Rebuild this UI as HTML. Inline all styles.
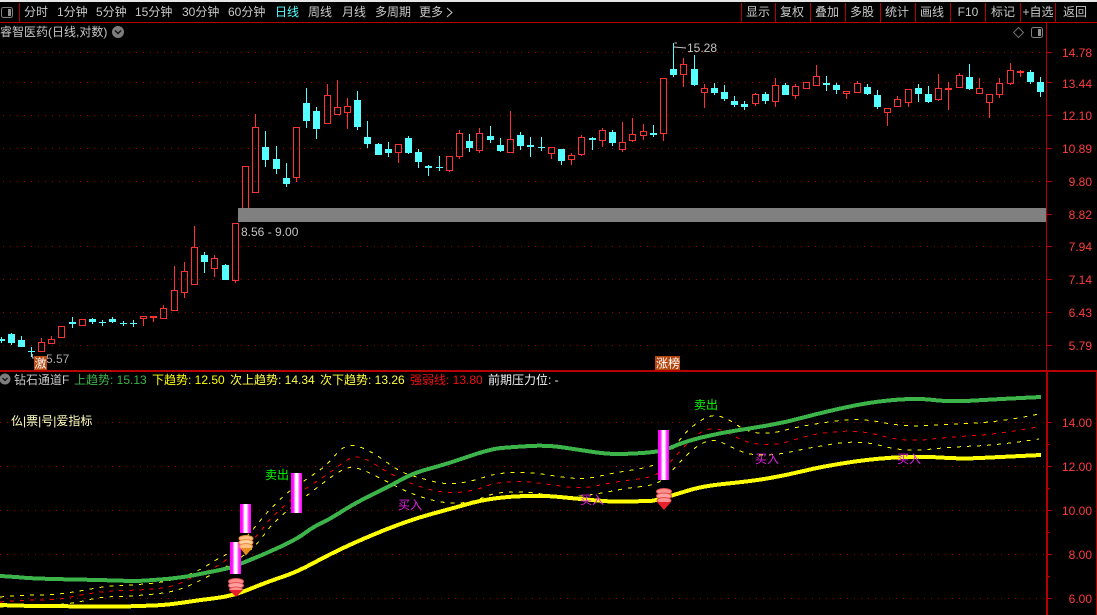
<!DOCTYPE html>
<html lang="zh">
<head>
<meta charset="utf-8">
<title>睿智医药</title>
<style>
html,body{margin:0;padding:0;background:#000;width:1097px;height:615px;overflow:hidden}
svg{display:block}
text{font-family:"Liberation Sans","Noto Sans CJK SC",sans-serif;font-size:12px}
.tb text{fill:#c8c8c8}
.ax text{fill:#ff3c3c;text-anchor:end}
.c{shape-rendering:crispEdges;fill:none}
</style>
</head>
<body>
<svg width="1097" height="615" viewBox="0 0 1097 615" xmlns="http://www.w3.org/2000/svg">
<rect width="1097" height="615" fill="#000"/>
<rect width="1097" height="2" fill="#e6e6e6"/>

<!-- grid -->
<g class="c" stroke="#a00000" stroke-dasharray="1 6">
<path d="M3 52.500H1044M3 82.500H1044M3 115.500H1044M3 148.500H1044M3 181.500H1044M3 246.500H1044M3 279.500H1044M3 312.500H1044M3 345.500H1044"/>
<path d="M0 422.500H1044M0 466.500H1044M0 510.500H1044M0 554.500H1044M0 598.500H1044"/>
</g>

<!-- toolbar -->
<g class="c" stroke="#b80000">
<path d="M0 22.500H1097M19.500 3V22M741.500 3V22M775.500 3V22M810.500 3V22M845.500 3V22M880.500 3V22M915.500 3V22M950.500 3V22M985.500 3V22M1020.500 3V22M1055.500 3V22"/>
<path d="M0 370.500H1097M0 371.500H1097"/>
<path d="M1046.500 22V615"/>
<path d="M1047.500 371V615M1096.500 371V615"/>
<path d="M1046 52.500H1052M1046 82.500H1052M1046 115.500H1052M1046 148.500H1052M1046 181.500H1052M1046 214.500H1052M1046 246.500H1052M1046 279.500H1052M1046 312.500H1052M1046 345.500H1052"/>
<path d="M1046 422.500H1052M1046 444.500H1050M1046 466.500H1052M1046 488.500H1050M1046 510.500H1052M1046 532.500H1050M1046 554.500H1052M1046 576.500H1050M1046 598.500H1052"/>
</g>
<rect x="1.500" y="7.500" width="11" height="10" rx="2" fill="none" stroke="#808080"/>
<rect x="8" y="9" width="3" height="7" fill="#909090"/>
<g class="tb">
<text x="24" y="16">分时</text>
<text x="57" y="16">1分钟</text>
<text x="96" y="16">5分钟</text>
<text x="135" y="16">15分钟</text>
<text x="182" y="16">30分钟</text>
<text x="228" y="16">60分钟</text>
<text x="275" y="16" style="fill:#55ffff">日线</text>
<text x="308" y="16">周线</text>
<text x="342" y="16">月线</text>
<text x="375" y="16">多周期</text>
<text x="419" y="16">更多</text>
<g text-anchor="middle">
<text x="758" y="16">显示</text>
<text x="792" y="16">复权</text>
<text x="827" y="16">叠加</text>
<text x="862" y="16">多股</text>
<text x="897" y="16">统计</text>
<text x="932" y="16">画线</text>
<text x="968" y="16">F10</text>
<text x="1003" y="16">标记</text>
<text x="1038" y="16">+自选</text>
<text x="1075" y="16">返回</text>
</g>
<text x="0" y="36">睿智医药(日线,对数)</text>
</g>
<path d="M447 8l5 4.500-5 4.500" fill="none" stroke="#c8c8c8"/>
<circle cx="118" cy="32" r="6" fill="#7d7d7d"/>
<path d="M115 30.500l3 3 3-3" fill="none" stroke="#111" stroke-width="1.500"/>
<path d="M1018.500 27.500l5 5-5 5-5-5z" fill="none" stroke="#707070"/>
<rect x="1031.500" y="27.500" width="11" height="10" rx="2" fill="none" stroke="#808080"/>
<rect x="1038" y="29" width="3" height="7" fill="#909090"/>
<g fill="#ff00ff" class="c">
<rect x="967" y="40" width="3" height="3"/>
<rect x="997" y="40" width="3" height="3"/>
<rect x="1028" y="40" width="3" height="3"/>
</g>

<!-- cyan candles -->
<path class="c" stroke="#55ffff" d="M1.500 337V343M11.500 333V345M21.500 336V347M31.500 347V357M72.500 317V328M92.500 318V324M102.500 320V326M112.500 317V323M123.500 321V326M133.500 320V327M204.500 252V273M225.500 264V280M265.500 131V167M276.500 146V174M286.500 163V187M306.500 88V128M316.500 107V139M357.500 91V130M367.500 121V148M378.500 143V155M388.500 142V157M408.500 136V154M418.500 149V168M428.500 165V176M439.500 156V171M469.500 134V152M490.500 126V143M500.500 138V152M520.500 132V150M530.500 137V157M541.500 137V151M561.500 149V165M592.500 137V150M612.500 130V146M653.500 125V137M673.500 43V77M694.500 55V86M714.500 83V95M724.500 85V101M734.500 96V107M744.500 101V110M765.500 92V104M785.500 83V95M826.500 76V91M836.500 83V94M867.500 84V95M877.500 90V109M918.500 84V102M928.500 86V103M969.500 64V90M1030.500 70V84M1040.500 77V97"/>
<path class="c" stroke="#55ffff" stroke-width="7" d="M1.500 339V341M11.500 334V343M21.500 340V347M31.500 351V352M72.500 322V324M92.500 319V322M102.500 322V323M112.500 319V322M123.500 323V324M133.500 323V324M204.500 255V262M225.500 265V280M265.500 147V160M276.500 159V169M286.500 178V184M306.500 103V121M316.500 111V129M357.500 100V127M367.500 137V144M378.500 144V155M388.500 149V153M408.500 138V153M418.500 152V162M428.500 166V168M439.500 167V168M469.500 141V148M490.500 136V140M500.500 145V151M520.500 135V146M530.500 145V147M541.500 147V148M561.500 149V161M592.500 138V140M612.500 132V143M653.500 133V135M673.500 69V75M694.500 69V85M714.500 88V93M724.500 92V99M734.500 101V105M744.500 104V107M765.500 94V101M785.500 85V95M826.500 83V85M836.500 85V90M867.500 87V94M877.500 95V107M918.500 88V94M928.500 94V102M969.500 77V89M1030.500 72V82M1040.500 82V92"/>

<!-- red candles -->
<path class="c" stroke="#ff3232" d="M41.500 338V342M51.500 336V339M143.500 319V326M153.500 318V322M163.500 305V308M174.500 266V290M184.500 262V271M184.500 293V298M194.500 226V247M214.500 255V258M214.500 269V277M235.500 281V283M255.500 114V127M296.500 178V182M327.500 84V95M337.500 80V107M347.500 98V106M347.500 113V129M398.500 153V163M449.500 171V172M459.500 130V133M459.500 157V159M479.500 128V133M479.500 151V153M510.500 111V139M551.500 154V159M571.500 153V155M571.500 160V165M581.500 135V137M581.500 155V156M602.500 128V130M602.500 141V147M622.500 122V142M622.500 150V152M632.500 118V134M632.500 141V142M643.500 124V131M643.500 136V140M663.500 134V141M683.500 58V64M683.500 75V87M704.500 84V88M704.500 93V108M755.500 93V94M755.500 104V106M775.500 78V85M775.500 102V107M795.500 84V86M795.500 96V99M816.500 65V76M846.500 94V99M857.500 81V83M887.500 113V126M897.500 96V99M908.500 103V107M938.500 74V88M938.500 100V101M948.500 82V88M948.500 90V110M959.500 73V75M979.500 78V88M989.500 103V118M999.500 78V83M999.500 95V98M1010.500 63V70M1010.500 84V85M1020.500 70V71M1020.500 73V77"/>
<path class="c" stroke="#ff3232" d="M38.500 342.500h6v9h-6zM48.500 339.500h6v4h-6zM58.500 326.500h6v11h-6zM79.500 319.500h6v6h-6zM140.500 316.500h6v2h-6zM160.500 308.500h6v10h-6zM171.500 290.500h6v20h-6zM181.500 271.500h6v21h-6zM191.500 247.500h6v37h-6zM211.500 258.500h6v10h-6zM232.500 223.500h6v57h-6zM242.500 166.500h6v42h-6zM252.500 127.500h6v65h-6zM293.500 127.500h6v50h-6zM324.500 95.500h6v28h-6zM334.500 107.500h6v7h-6zM344.500 106.500h6v6h-6zM395.500 144.500h6v8h-6zM446.500 156.500h6v14h-6zM456.500 133.500h6v23h-6zM476.500 133.500h6v17h-6zM507.500 139.500h6v13h-6zM548.500 147.500h6v6h-6zM568.500 155.500h6v4h-6zM578.500 137.500h6v17h-6zM599.500 130.500h6v10h-6zM619.500 142.500h6v7h-6zM629.500 134.500h6v6h-6zM640.500 131.500h6v4h-6zM660.500 78.500h6v55h-6zM680.500 64.500h6v10h-6zM701.500 88.500h6v4h-6zM752.500 94.500h6v9h-6zM772.500 85.500h6v16h-6zM792.500 86.500h6v9h-6zM803.500 82.500h6v6h-6zM813.500 76.500h6v9h-6zM843.500 91.500h6v2h-6zM854.500 83.500h6v9h-6zM884.500 108.500h6v4h-6zM894.500 99.500h6v7h-6zM905.500 89.500h6v13h-6zM935.500 88.500h6v11h-6zM956.500 75.500h6v12h-6zM976.500 88.500h6v5h-6zM986.500 94.500h6v8h-6zM996.500 83.500h6v11h-6zM1007.500 70.500h6v13h-6z"/>
<path class="c" stroke="#ff3232" stroke-width="7" d="M153.500 316V318M948.500 88V90M1020.500 71V73"/>

<!-- band -->
<rect x="238" y="208" width="808" height="14" fill="#808080"/>
<text x="241" y="236" fill="#c4c4c4">8.56 - 9.00</text>
<text x="687" y="52" fill="#c4c4c4">15.28</text>
<path d="M674.500 43H677M674 47L686 48" stroke="#c4c4c4" fill="none"/>
<text x="46" y="363" fill="#a8a8a8">5.57</text>
<path class="c" stroke="#a8a8a8" d="M32.500 354V358H36"/>
<rect x="34" y="356" width="13" height="14" fill="#b84a12"/>
<text x="34.500" y="367.500" fill="#fff">激</text>
<rect x="655" y="356" width="25" height="14" fill="#b4450f"/>
<text x="656" y="367.500" fill="#fff">涨榜</text>

<!-- right axis labels -->
<g class="ax">
<text x="1092" y="57">14.78</text>
<text x="1092" y="88">13.44</text>
<text x="1092" y="120">12.10</text>
<text x="1092" y="153">10.89</text>
<text x="1092" y="186">9.80</text>
<text x="1092" y="219">8.82</text>
<text x="1092" y="251">7.94</text>
<text x="1092" y="284">7.14</text>
<text x="1092" y="317">6.43</text>
<text x="1092" y="350">5.79</text>
<text x="1092" y="427">14.00</text>
<text x="1092" y="471">12.00</text>
<text x="1092" y="515">10.00</text>
<text x="1092" y="559">8.00</text>
<text x="1092" y="603">6.00</text>
</g>

<!-- lower header -->
<circle cx="5" cy="379" r="5.500" fill="#7d7d7d"/>
<path d="M2.500 378l2.500 2.500 2.500-2.500" fill="none" stroke="#111" stroke-width="1.300"/>
<text x="14" y="384" fill="#c8c8c8">钻石通道F</text>
<text x="74" y="384" fill="#3cb44a">上趋势: 15.13</text>
<text x="152" y="384" fill="#ffff00">下趋势: 12.50</text>
<text x="230" y="384" fill="#ffff40">次上趋势: 14.34</text>
<text x="320" y="384" fill="#ffff40">次下趋势: 13.26</text>
<text x="410" y="384" fill="#f01010">强弱线: 13.80</text>
<text x="488" y="384" fill="#f4f4f4">前期压力位: -</text>
<text x="11" y="425" fill="#ffffc0">仫|票|号|爱指标</text>

<!-- dashed channels -->
<path class="c" stroke="#ffff00" stroke-dasharray="4 6" d="M0 597 Q20 595 36.500 595 Q53 595 66.500 593 Q80 591 93.500 588.500 Q107 586 120 585.500 Q133 585 150 583.500 Q167 582 182 577 Q197 572 207 565.500 Q217 559 223.500 556 Q230 553 241.500 541.500 Q253 530 260 521 Q267 512 278.500 501 Q290 490 300 483.500 Q310 477 318.500 471 Q327 465 335 455.500 Q343 446 350 445.500 Q357 445 367 450 Q377 455 388.500 463.500 Q400 472 410 475 Q420 478 433.500 481.500 Q447 485 460 483 Q473 481 485 477 Q497 473 513.500 472.500 Q530 472 548.500 475 Q567 478 577 478.500 Q587 479 600 476 Q613 473 635 469.500 Q657 466 663.500 459.500 Q670 453 678.500 441.500 Q687 430 698.500 422 Q710 414 718.500 416 Q727 418 737 425 Q747 432 758.500 433 Q770 434 781.500 431 Q793 428 806.500 425.500 Q820 423 840 420.500 Q860 418 882.500 422.500 Q905 427 927.500 425.500 Q950 424 975 423 Q1000 422 1039 414"/>
<path class="c" stroke="#ff0000" stroke-dasharray="4 6" d="M0 602 Q20 600 38.500 600 Q57 600 68.500 597.500 Q80 595 93.500 593 Q107 591 125 590.500 Q143 590 158 588.500 Q173 587 185 581 Q197 575 207 571 Q217 567 226 560 Q235 553 246 545 Q257 537 263.500 527.500 Q270 518 286.500 504 Q303 490 315 482.500 Q327 475 338.500 466 Q350 457 356.500 457 Q363 457 375 464.500 Q387 472 400 478.500 Q413 485 430 489.500 Q447 494 462 492 Q477 490 485 486.500 Q493 483 508 482 Q523 481 538 483 Q553 485 568 487 Q583 489 598 485.500 Q613 482 635 479.500 Q657 477 664.500 468.500 Q672 460 685 446 Q698 432 707.500 429.500 Q717 427 727 432.500 Q737 438 745 441 Q753 444 765 444.500 Q777 445 788.500 441.500 Q800 438 810 435.500 Q820 433 840 431.500 Q860 430 882.500 436 Q905 442 927.500 439.500 Q950 437 975 435.500 Q1000 434 1037 427"/>
<path class="c" stroke="#ffff00" stroke-dasharray="4 6" d="M0 607 Q27 605 42 605 Q57 605 68.500 603.500 Q80 602 90 599.500 Q100 597 116.500 596.500 Q133 596 150 594.500 Q167 593 177 590 Q187 587 197 582 Q207 577 221 569.500 Q235 562 246 553.500 Q257 545 265 533.500 Q273 522 291.500 507.500 Q310 493 326.500 480.500 Q343 468 350 467.500 Q357 467 368.500 472.500 Q380 478 396.500 486.500 Q413 495 430 499.500 Q447 504 460 503 Q473 502 483 497.500 Q493 493 508 492 Q523 491 545 494.500 Q567 498 585 495.500 Q603 493 615 490.500 Q627 488 642 486.500 Q657 485 664.500 478 Q672 471 682.500 459.500 Q693 448 703 443 Q713 438 723 443 Q733 448 741.500 451.500 Q750 455 763.500 455 Q777 455 795 451 Q813 447 836.500 443.500 Q860 440 882.500 446 Q905 452 927.500 449.500 Q950 447 975 446 Q1000 445 1039 439"/>

<!-- trend lines -->
<path class="c" stroke="#3cb44a" stroke-width="4" d="M0 576 Q17 577 21.500 577.500 Q26 578 38 578.500 Q50 579 75 579.500 Q100 580 115 580.500 Q130 581 135 581 Q140 581 160 579.500 Q180 578 195 575 Q210 572 220 570 Q230 568 235 566 Q240 564 253.500 558.500 Q267 553 282 546 Q297 539 305 533 Q313 527 321.500 523 Q330 519 338.500 513.500 Q347 508 357 502.500 Q367 497 378.500 491.500 Q390 486 401.500 479.500 Q413 473 430 468.500 Q447 464 468.500 456.500 Q490 449 501.500 448 Q513 447 530 446 Q547 445 563.500 447.500 Q580 450 593.500 452 Q607 454 617 454 Q627 454 642 453 Q657 452 663.500 450 Q670 448 678.500 444.500 Q687 441 703.500 437 Q720 433 736.500 430.500 Q753 428 770 425 Q787 422 803.500 417.500 Q820 413 845 407.500 Q870 402 893.500 400 Q917 398 933.500 400 Q950 402 975 400.500 Q1000 399 1041 397"/>
<path class="c" stroke="#ffff00" stroke-width="4" d="M0 605 Q27 606 42 606 Q57 606 82 606.500 Q107 607 123.500 606.500 Q140 606 153.500 605.500 Q167 605 183.500 602.500 Q200 600 216.500 598 Q233 596 250 589 Q267 582 282 577 Q297 572 313.500 563 Q330 554 348.500 545.500 Q367 537 388.500 528.500 Q410 520 431.500 514 Q453 508 471.500 503 Q490 498 515 496.500 Q540 495 560 497 Q580 499 596.500 500.500 Q613 502 630 501.500 Q647 501 650 501 Q653 501 665 497.500 Q677 494 690 490 Q703 486 728 483.500 Q753 481 770 478 Q787 475 803.500 471 Q820 467 845 463 Q870 459 895 457.500 Q920 456 940 457.500 Q960 459 980 458 Q1000 457 1041 455"/>

<!-- signal bars -->
<defs>
<linearGradient id="g" x1="0" x2="1" y1="0" y2="0">
<stop offset="0" stop-color="#ff00ff"/>
<stop offset=".22" stop-color="#ff10ff"/>
<stop offset=".42" stop-color="#ffffff"/>
<stop offset=".6" stop-color="#ffffff"/>
<stop offset=".8" stop-color="#ff30ff"/>
<stop offset="1" stop-color="#ff00ff"/>
</linearGradient>
</defs>
<rect x="230" y="542" width="11" height="32" fill="url(#g)"/>
<rect x="240" y="504" width="11" height="29" fill="url(#g)"/>
<rect x="291" y="473" width="11" height="40" fill="url(#g)"/>
<rect x="658" y="430" width="11" height="50" fill="url(#g)"/>

<!-- arrow icons -->
<g>
<ellipse cx="236" cy="581.500" rx="7.500" ry="3" fill="#ff9090" stroke="#e05050"/>
<ellipse cx="236" cy="585.500" rx="7.500" ry="3" fill="#ffa0a0" stroke="#e05050"/>
<ellipse cx="236" cy="589.500" rx="6.500" ry="2.500" fill="#ff9090" stroke="#e05050"/>
<path d="M229 590h14l-7 7z" fill="#e8202c"/>
</g>
<g>
<ellipse cx="246" cy="538.500" rx="7" ry="3" fill="#ffc080" stroke="#e89040"/>
<ellipse cx="246" cy="542.500" rx="7" ry="3" fill="#ffd0a0" stroke="#e89040"/>
<ellipse cx="246" cy="546.500" rx="6.500" ry="3" fill="#ffc080" stroke="#e89040"/>
<path d="M240 548h12l-6 7.500z" fill="#e88a20"/>
</g>
<g>
<ellipse cx="664" cy="491.500" rx="7.500" ry="3" fill="#ff9090" stroke="#e05050"/>
<ellipse cx="664" cy="496" rx="7.500" ry="3" fill="#ffa0a0" stroke="#e05050"/>
<ellipse cx="664" cy="500.500" rx="7" ry="3" fill="#ff9090" stroke="#e05050"/>
<path d="M657 502h14l-7 8z" fill="#e8202c"/>
</g>

<!-- signal labels -->
<g fill="#00ff00">
<text x="265" y="479">卖出</text>
<text x="694" y="409">卖出</text>
</g>
<g fill="#e020e0">
<text x="398" y="509">买入</text>
<text x="580" y="504">买入</text>
<text x="755" y="463">买入</text>
<text x="897" y="463">买入</text>
</g>
</svg>
</body>
</html>
